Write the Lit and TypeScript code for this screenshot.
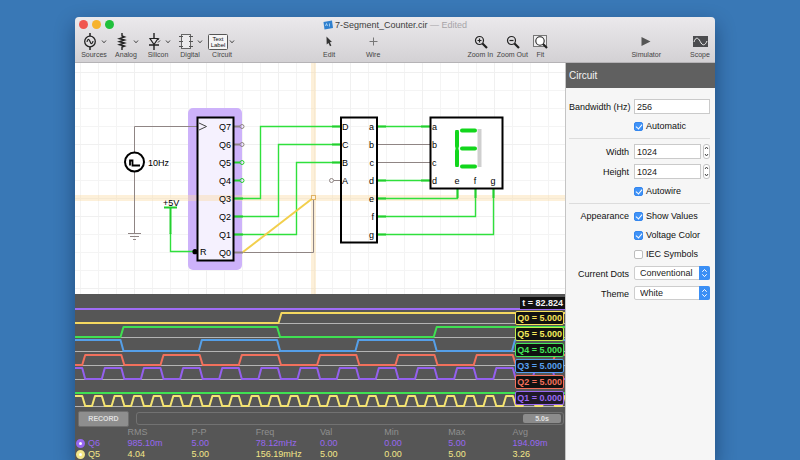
import { LitElement, html, svg, css } from "lit";
import { customElement } from "lit/decorators.js";

const GREEN = "#2fe03c";
const WIRE_GREY = "#8f8584";

/* Square-wave path: starts at `high` or low, toggles at first + k * half. */
function wave(hi: number, lo: number, startHigh: boolean, first: number, half: number, end = 2400): string {
  let level = startHigh ? hi : lo;
  let d = `M0 ${level}`;
  for (let x = first; x < end; x += half) {
    const next = level === hi ? lo : hi;
    d += ` L${(x - 1.5).toFixed(1)} ${level} L${(x + 1.5).toFixed(1)} ${next}`;
    level = next;
  }
  return d + ` L${end} ${level}`;
}

const PERIOD = 39.15;
const traces = [
  { color: "#9f6cf5", d: "M0 15 H2400" },
  { color: "#f5d860", d: wave(19, 29, false, 205, 5000) },
  { color: "#3fe052", d: wave(33, 43, false, 47, PERIOD * 4) },
  { color: "#559fe8", d: wave(46, 57, true, 47, PERIOD * 2) },
  { color: "#f2705c", d: wave(61, 71, false, 8.7, PERIOD) },
  { color: "#9460ee", d: wave(74, 85, true, 8.7, PERIOD / 2) },
  { color: "#3fe052", d: "M0 99 H2400" },
  { color: "#f5e472", d: wave(102, 112, true, 8.7, PERIOD / 4) },
];

const readouts = [
  { text: "Q0 = 5.000", cls: "yellow" },
  { text: "Q5 = 5.000", cls: "lime" },
  { text: "Q4 = 5.000", cls: "green" },
  { text: "Q3 = 5.000", cls: "blue" },
  { text: "Q2 = 5.000", cls: "red" },
  { text: "Q1 = 0.000", cls: "purple" },
];

@customElement("circuit-toolbar")
export class CircuitToolbar extends LitElement {
  static styles = css`
    :host {
      display: block;
      color: #444;
      background: linear-gradient(#ebe9ec, #d3d1d4);
      border-bottom: 1px solid #b5b3b6;
      border-radius: 4px 4px 0 0;
    }
    .title-row {
      display: grid;
      grid-template-columns: 1fr auto 1fr;
      align-items: center;
      height: 15px;
      padding: 0 4px;
    }
    .lights {
      display: flex;
      gap: 4px;
    }
    .light {
      width: 9px;
      height: 9px;
      padding: 0;
      border: 0;
      border-radius: 50%;
    }
    .close { background: #f0564f; }
    .mini { background: #f6b32e; }
    .full { background: #20c03c; }
    .title {
      display: flex;
      align-items: center;
      gap: 2px;
      margin: 0;
      font-size: 9px;
      font-weight: 400;
      line-height: 12px;
      color: #3c3c3c;
    }
    .edited { color: #a6a4a8; }
    .tools {
      display: flex;
      justify-content: space-between;
      padding: 1px 3px 2px;
    }
    .group { display: flex; }
    .wide { gap: 20px; }
    .wider { gap: 27px; }
    .tool {
      display: flex;
      flex-direction: column;
      align-items: center;
      min-width: 24px;
      padding: 0;
      border: 0;
      background: none;
      font: 7px/10px "Liberation Sans", Arial, sans-serif;
      color: #444;
      white-space: nowrap;
    }
    .part, .zoom { width: 32px; }
    .icons {
      display: flex;
      align-items: center;
      height: 17px;
    }
    .part .icons {
      width: 100%;
      gap: 0;
    }
    svg { display: block; }
  `;

  private part(label: string, icon: unknown) {
    return html`<button class="tool part">
      <span class="icons">
        <svg width="23" height="17" fill="none" stroke="#222">${icon}</svg>
        <svg width="6" height="6" fill="none" stroke="#444"><path d="M1 1.5 L3 3.8 L5 1.5" /></svg>
      </span>
      <span>${label}</span>
    </button>`;
  }

  render() {
    const glass = svg`<circle cx="6.5" cy="6.5" r="4" stroke-width="1.2" /><path d="M9.5 9.5 L14 14" stroke-width="2.2" />`;
    return html`
      <div class="title-row">
        <div class="lights">
          <button class="light close" aria-label="Close"></button>
          <button class="light mini" aria-label="Minimize"></button>
          <button class="light full" aria-label="Zoom window"></button>
        </div>
        <h1 class="title">
          <svg width="10" height="10">
            <path d="M0.5 2 L9 0.5 L10 8 L1.5 9.5 Z" fill="#2f80cf" />
            <path d="M2.5 6 L3.5 3.5 L4.5 6 M6.5 3.5 V6.5" fill="none" stroke="#bfe0fa" stroke-width="0.8" />
          </svg>
          <span>7-Segment_Counter.cir <span class="edited">— Edited</span></span>
        </h1>
      </div>
      <div class="tools">
        <div class="group">
          ${this.part("Sources", svg`
            <path d="M12 0 V3 M12 14 V17" stroke-width="1.5" />
            <circle cx="12" cy="8.5" r="5.3" stroke-width="1.3" />
            <path d="M9 9 C9.5 5.5 11 5.5 12 8.5 S14.5 11.5 15 8" stroke-width="1.2" />`)}
          ${this.part("Analog", svg`
            <path d="M12 0 V3 L14.5 4 L9.5 5.6 L14.5 7 L9.5 8.6 L14.5 10 L9.5 11.6 L14.5 13 L12 14 V17" stroke-width="1.4" />`)}
          ${this.part("Silicon", svg`
            <path d="M12 0 V17 M7 12 H17" stroke-width="1.4" />
            <path d="M8 5.5 H16 L12 11.5 Z" fill="#e3e1e4" stroke-width="1.2" />
            <path d="M16 9.5 L18 7.5 M16 7 L17 5.5" stroke-width="0.9" />`)}
          ${this.part("Digital", svg`
            <rect x="7.5" y="1.5" width="9" height="14" stroke="#666" fill="#ecebed" />
            <path d="M5 3.5 H9 M5 8.5 H9 M5 13.5 H9 M15 3.5 H19 M15 8.5 H19 M15 13.5 H19" stroke="#555" />`)}
          ${this.part("Circuit", svg`
            <rect x="2.5" y="1.5" width="19" height="15" rx="1" stroke="#555" fill="#f6f5f6" />
            <g fill="#111" stroke="none" font-size="6" text-anchor="middle">
              <text x="12" y="8">Text</text><text x="12" y="14">Label</text>
            </g>`)}
        </div>
        <div class="group wide">
          <button class="tool">
            <span class="icons"><svg width="10" height="13"><path d="M2.5 1.5 L8 7 L5.8 7.2 L7.4 10.6 L6 11.3 L4.5 7.9 L2.7 9.4 Z" fill="#333" /></svg></span>
            <span>Edit</span>
          </button>
          <button class="tool">
            <span class="icons"><svg width="9" height="9"><path d="M4.5 0.5 V8.5 M0.5 4.5 H8.5" stroke="#777" /></svg></span>
            <span>Wire</span>
          </button>
        </div>
        <div class="group">
          <button class="tool zoom">
            <span class="icons"><svg width="15" height="15" fill="none" stroke="#222">${glass}<path d="M4.5 6.5 H8.5 M6.5 4.5 V8.5" stroke-width="1.2" /></svg></span>
            <span>Zoom In</span>
          </button>
          <button class="tool zoom">
            <span class="icons"><svg width="15" height="15" fill="none" stroke="#222">${glass}<path d="M4.5 6.5 H8.5" stroke-width="1.2" /></svg></span>
            <span>Zoom Out</span>
          </button>
          <button class="tool">
            <span class="icons"><svg width="15" height="15" fill="none" stroke="#222"><rect x="0.5" y="1.5" width="13" height="11" stroke="#777" fill="#efeef0" /><circle cx="7" cy="7" r="4.2" fill="#fff" stroke-width="1.1" /><path d="M10 10 L14 14" stroke-width="2.2" /></svg></span>
            <span>Fit</span>
          </button>
        </div>
        <div class="group wider">
          <button class="tool">
            <span class="icons"><svg width="10" height="9"><path d="M0.5 0 L9.5 4.5 L0.5 9 Z" fill="#555" /></svg></span>
            <span>Simulator</span>
          </button>
          <button class="tool">
            <span class="icons"><svg width="15" height="11"><rect width="15" height="11" fill="#4c4c4f" /><path d="M1 6 C2.5 1 5 1 7.2 5.5 S12 10 14 5" fill="none" stroke="#eee" /></svg></span>
            <span>Scope</span>
          </button>
        </div>
      </div>
    `;
  }
}

@customElement("circuit-canvas")
export class CircuitCanvas extends LitElement {
  static styles = css`
    :host {
      display: block;
      height: 231px;
      background: #fff;
    }
    .sheet {
      display: block;
      width: 100%;
      height: 100%;
      font-size: 9px;
    }
  `;

  render() {
    const rows = [0, 1, 2, 3, 4, 5, 6, 7];
    const pinY = (i: number) => 63.5 + 18 * i;
    return html`
      <svg class="sheet" role="img" aria-label="Counter circuit">
        <defs>
          <pattern id="minor" x="5" y="9" width="18" height="18" patternUnits="userSpaceOnUse">
            <path d="M0.5 0 V18 M0 0.5 H18" stroke="#f4f4f4" />
          </pattern>
          <pattern id="major" x="59" y="9" width="72" height="72" patternUnits="userSpaceOnUse">
            <path d="M0.5 0 V72 M0 0.5 H72" stroke="#f0f0f0" />
          </pattern>
        </defs>
        <rect width="100%" height="100%" fill="url(#minor)" />
        <rect width="100%" height="100%" fill="url(#major)" />
        <rect x="113" y="45" width="54" height="162" rx="5" fill="#cdb2fa" />
        <rect x="122" y="54" width="36" height="144" fill="#f5f1fe" />
        <rect x="0" y="132" width="100%" height="6" fill="#f9d9a0" opacity="0.4" />
        <rect x="236" y="0" width="5" height="100%" fill="#f9d9a0" opacity="0.4" />

        <g fill="none" stroke=${WIRE_GREY}>
          <path d="M59.5 89 V63.5 H122 M59.5 109 V170" />
          <path d="M53 170.5 H66 M55 173.5 H64 M58 176.5 H61" stroke-width="1.2" />
          <path d="M167 189.5 H238.5 V137" />
          <path d="M302 81.5 H355 M302 99.5 H355" />
          <path d="M259 117.5 H266" />
          <circle cx="256.5" cy="117.5" r="2" />
          <path d="M159 63.5 H165 M159 81.5 H165 M159 189.5 H168" stroke-width="2" />
          <circle cx="167" cy="63.5" r="2" />
          <circle cx="167" cy="81.5" r="2" />
        </g>

        <g fill="none" stroke=${GREEN}>
          <path d="M95.5 170 V188.5 H119" stroke-width="1.4" />
          <path d="M159 135.5 H185.5 V63.5 H266" stroke-width="1.4" />
          <path d="M159 153.5 H203.5 V81.5 H266" stroke-width="1.4" />
          <path d="M159 171.5 H221.5 V99.5 H266" stroke-width="1.4" />
          <path d="M302 63.5 H355 M302 117.5 H355" stroke-width="1.4" />
          <path d="M302 135.5 H382.5 V126 M302 153.5 H400.5 V126 M302 171.5 H418.5 V126" stroke-width="1.4" />
        </g>
        <g fill="none" stroke="#22cf2e" stroke-width="2">
          <path d="M89 144.5 H102 M95.5 144 V171" />
          <path d="M159 99.5 H165 M159 117.5 H165 M159 135.5 H168 M159 153.5 H168 M159 171.5 H168" />
          <path d="M257 63.5 H266 M257 81.5 H266 M257 99.5 H266" />
          <path d="M302 63.5 H311 M302 117.5 H311 M302 135.5 H311 M302 153.5 H311 M302 171.5 H311" />
          <path d="M346 63.5 H355 M346 117.5 H355 M382.5 126 V135 M400.5 126 V135 M418.5 126 V135" />
          <circle cx="167" cy="99.5" r="2" stroke-width="1" />
          <circle cx="167" cy="117.5" r="2" stroke-width="1" />
        </g>

        <path d="M168 189 L238 135" stroke="#f2cf4c" stroke-width="2" />
        <rect x="236.5" y="132.5" width="4" height="4" fill="#fdf2dc" stroke="#e0b264" />

        <circle cx="59.5" cy="99" r="9.5" fill="#fff" stroke="#000" stroke-width="2" />
        <path d="M55 102.5 V97.5 H57.5 V102.5 H65" fill="none" stroke="#000" stroke-width="1.8" />

        <g fill="none" stroke="#000" stroke-width="2">
          <rect x="122.5" y="54.5" width="36" height="143" />
          <rect x="266" y="54.5" width="36" height="125" />
          <rect x="355.5" y="54.5" width="72" height="71" fill="#fff" />
        </g>
        <path d="M124 60 L131.5 63.5 L124 67" fill="none" stroke="#444" />
        <circle cx="120" cy="188.7" r="2.6" fill="#000" />

        <path d="M404.5 66 V104" stroke="#cfcfcf" stroke-width="4" />
        <g stroke="#12d61c" stroke-width="4" stroke-linecap="round">
          <path d="M382 69 V83 M382 88 V102 M387 67.5 H400 M387 85.5 H400 M387 103.5 H400" />
        </g>
        <path d="M382 67 V104" stroke="#12d61c" stroke-width="3" />

        <g fill="#000">
          <text x="73" y="103">10Hz</text>
          <text x="88" y="143">+5V</text>
          <text x="125" y="192">R</text>
          ${rows.map((i) => svg`<text x="156" y=${pinY(i) + 3.5} text-anchor="end">Q${7 - i}</text>`)}
          ${["D", "C", "B", "A"].map((t, i) => svg`<text x="267" y=${pinY(i) + 3.5}>${t}</text>`)}
          ${[..."abcdefg"].map((t, i) => svg`<text x="299" y=${pinY(i) + 3.5} text-anchor="end">${t}</text>`)}
          ${[..."abcd"].map((t, i) => svg`<text x="357" y=${pinY(i) + 3.5}>${t}</text>`)}
          ${[..."efg"].map((t, i) => svg`<text x=${382 + 18 * i} y="121" text-anchor="middle">${t}</text>`)}
        </g>
      </svg>
    `;
  }
}

@customElement("circuit-scope")
export class CircuitScope extends LitElement {
  static styles = css`
    :host {
      display: flex;
      flex-direction: column;
      flex: 1;
      background: #565656;
    }
    .plot {
      position: relative;
      height: 116px;
      overflow: hidden;
    }
    .traces {
      display: block;
      width: 100%;
      height: 100%;
    }
    .readouts {
      position: absolute;
      top: 3px;
      right: 0;
      display: flex;
      flex-direction: column;
      align-items: flex-end;
      gap: 2px;
      font-size: 9px;
      font-weight: 700;
      line-height: 12px;
    }
    .time {
      padding: 0 2px;
      background: #111;
      color: #f2f2f2;
    }
    .readout {
      margin-right: 1px;
      padding: 0 1px;
      border: 1px solid currentColor;
      border-radius: 2px;
      background: #111;
    }
    .yellow { color: #f7e05a; }
    .lime { color: #f3ea5c; border-color: #c4ee4c; }
    .green { color: #44e85a; }
    .blue { color: #569ff0; }
    .red { color: #f4705c; }
    .purple { color: #9a68f2; background: #1f1a28; }
    .controls {
      display: flex;
      align-items: center;
      gap: 7px;
      height: 17px;
      padding: 0 1px 0 3px;
    }
    .record {
      width: 51px;
      height: 16px;
      padding: 0;
      border: 1px solid #6e6e6e;
      border-radius: 2px;
      background: #8e8e8e;
      color: #dedede;
      font: 700 7px/12px "Liberation Sans", Arial, sans-serif;
    }
    .track {
      display: flex;
      flex: 1;
      justify-content: flex-end;
      padding: 1px 2px;
      border: 1px solid #727272;
      border-radius: 3px;
    }
    .thumb {
      width: 38px;
      height: 9px;
      padding: 0;
      border: 0;
      border-radius: 2px;
      background: #8c8c8c;
      color: #e4e4e4;
      font: 700 7px/9px "Liberation Sans", Arial, sans-serif;
    }
    .stats {
      width: 100%;
      table-layout: fixed;
      border-collapse: collapse;
      font-size: 9px;
      line-height: 11px;
      white-space: nowrap;
    }
    .name-col { width: 10.7%; }
    .stat-col { width: 13.1%; }
    th, td {
      padding: 0;
      text-align: left;
      font-weight: 400;
    }
    thead { color: #8f8f8f; }
    .row-name {
      display: flex;
      align-items: center;
      gap: 3px;
      padding-left: 1px;
    }
    .q6 { color: #9767f0; }
    .q5 { color: #f3e688; }
    .dot {
      width: 3px;
      height: 3px;
      border: 3px solid currentColor;
      border-radius: 50%;
      background: #fff;
    }
  `;

  render() {
    const stats = [
      { name: "Q6", cls: "q6", v: ["985.10m", "5.00", "78.12mHz", "0.00", "0.00", "5.00", "194.09m"] },
      { name: "Q5", cls: "q5", v: ["4.04", "5.00", "156.19mHz", "5.00", "0.00", "5.00", "3.26"] },
    ];
    return html`
      <div class="plot">
        <svg class="traces" fill="none" role="img" aria-label="Signal traces">
          <path d="M0 29.5 H2400 M0 43.5 H2400 M0 57.5 H2400 M0 71.5 H2400 M0 85.5 H2400 M0 112.5 H2400" stroke="#b4b4b4" />
          ${traces.map((t) => svg`<path d=${t.d} stroke=${t.color} stroke-width="2" stroke-linejoin="round" />`)}
        </svg>
        <div class="readouts">
          <span class="time">t = 82.824</span>
          ${readouts.map((r) => html`<span class="readout ${r.cls}">${r.text}</span>`)}
        </div>
      </div>
      <div class="controls">
        <button class="record">RECORD</button>
        <div class="track"><button class="thumb">5.0s</button></div>
      </div>
      <table class="stats">
        <colgroup>
          <col class="name-col" />
          ${[1, 2, 3, 4, 5, 6].map(() => html`<col class="stat-col" />`)}
          <col />
        </colgroup>
        <thead>
          <tr>
            <td></td>
            ${["RMS", "P-P", "Freq", "Val", "Min", "Max", "Avg"].map((h) => html`<th scope="col">${h}</th>`)}
          </tr>
        </thead>
        <tbody>
          ${stats.map((s) => html`<tr class=${s.cls}>
            <th scope="row"><span class="row-name"><span class="dot"></span>${s.name}</span></th>
            ${s.v.map((v) => html`<td>${v}</td>`)}
          </tr>`)}
        </tbody>
      </table>
    `;
  }
}

@customElement("circuit-inspector")
export class CircuitInspector extends LitElement {
  static styles = css`
    :host {
      display: block;
      box-sizing: border-box;
      border-left: 1px solid #c4c4c4;
      background: #f6f6f6;
      color: #111;
      font-size: 9px;
      line-height: 14px;
    }
    .heading {
      margin: 0;
      padding-left: 3px;
      background: #606060;
      color: #f4f4f4;
      font-size: 10px;
      font-weight: 400;
      line-height: 25px;
    }
    .form { padding: 6px 5px 0 3px; }
    .section {
      display: grid;
      grid-template-columns: 60px 1fr;
      gap: 5px;
      align-items: center;
      padding: 5px 0;
    }
    .section + .section { border-top: 1px solid #dcdcdc; }
    .name {
      text-align: right;
      white-space: nowrap;
    }
    .check {
      grid-column: 2;
      display: flex;
      align-items: center;
      gap: 3px;
      white-space: nowrap;
    }
    .box {
      appearance: none;
      display: grid;
      place-items: center;
      box-sizing: border-box;
      width: 9px;
      height: 9px;
      margin: 0;
      border: 1px solid #bdbdbd;
      border-radius: 2px;
      background: #fff;
    }
    .box:checked {
      border-color: #3486ee;
      background: #3f92f7;
    }
    .box:checked::after {
      content: "";
      box-sizing: border-box;
      width: 4px;
      height: 6px;
      border: solid #fff;
      border-width: 0 1px 1px 0;
      transform: rotate(40deg);
    }
    .field {
      display: flex;
      gap: 2px;
      min-width: 0;
    }
    .input {
      box-sizing: border-box;
      flex: 1;
      min-width: 0;
      height: 15px;
      padding: 0 2px;
      border: 1px solid #cacaca;
      background: #fff;
      color: #222;
      font: 9px/12px "Liberation Sans", Arial, sans-serif;
    }
    .stepper {
      display: flex;
      flex-direction: column;
      box-sizing: border-box;
      width: 7px;
      border: 1px solid #c2c2c2;
      border-radius: 3px;
      background: #fff;
    }
    .step {
      display: grid;
      place-items: center;
      flex: 1;
      padding: 0;
      border: 0;
      background: none;
    }
    .select-wrap {
      position: relative;
      height: 15px;
    }
    .select {
      appearance: none;
      box-sizing: border-box;
      width: 100%;
      height: 14px;
      padding: 0 12px 0 5px;
      border: 1px solid #cdcdcd;
      border-radius: 2px;
      background: #fff;
      color: #222;
      font: 9px/12px "Liberation Sans", Arial, sans-serif;
      display: block;
    }
    .arrows {
      position: absolute;
      top: 0;
      right: 0;
      pointer-events: none;
    }
  `;

  private check(id: string, label: string, on: boolean) {
    return html`<label class="check"><input class="box" type="checkbox" id=${id} ?checked=${on} />${label}</label>`;
  }

  private size(id: string, label: string) {
    return html`<label class="name" for=${id}>${label}</label>
      <div class="field">
        <input class="input" id=${id} type="text" value="1024" />
        <div class="stepper">
          <button class="step" aria-label="Increase ${label}"><svg width="5" height="4" fill="none" stroke="#444"><path d="M1 3 L2.5 1 L4 3" /></svg></button>
          <button class="step" aria-label="Decrease ${label}"><svg width="5" height="4" fill="none" stroke="#444"><path d="M1 1 L2.5 3 L4 1" /></svg></button>
        </div>
      </div>`;
  }

  private choice(id: string, label: string, value: string) {
    return html`<label class="name" for=${id}>${label}</label>
      <div class="select-wrap">
        <select class="select" id=${id}><option>${value}</option></select>
        <svg class="arrows" width="11" height="14" fill="none">
          <path d="M0 0 H9 A2 2 0 0 1 11 2 V12 A2 2 0 0 1 9 14 H0 Z" fill="#3b8ff5" />
          <path d="M3.3 5.8 L5.5 3.5 L7.7 5.8 M3.3 8.3 L5.5 10.6 L7.7 8.3" stroke="#fff" />
        </svg>
      </div>`;
  }

  render() {
    return html`
      <h2 class="heading">Circuit</h2>
      <div class="form">
        <div class="section">
          <label class="name" for="bandwidth">Bandwidth (Hz)</label>
          <div class="field"><input class="input" id="bandwidth" type="text" value="256" /></div>
          ${this.check("automatic", "Automatic", true)}
        </div>
        <div class="section">
          ${this.size("width", "Width")} ${this.size("height", "Height")}
          ${this.check("autowire", "Autowire", true)}
        </div>
        <div class="section">
          <span class="name">Appearance</span>
          ${this.check("values", "Show Values", true)}
          ${this.check("voltage", "Voltage Color", true)}
          ${this.check("iec", "IEC Symbols", false)}
          ${this.choice("dots", "Current Dots", "Conventional")}
          ${this.choice("theme", "Theme", "White")}
        </div>
      </div>
    `;
  }
}

@customElement("app-root")
export class AppRoot extends LitElement {
  static styles = css`
    :host {
      display: flex;
      box-sizing: border-box;
      min-height: 100vh;
      padding: 17px 85px 0 75px;
      overflow: hidden;
      background: #3978b6;
      font-family: "Liberation Sans", Arial, sans-serif;
    }
    .window {
      display: flex;
      flex-direction: column;
      flex: 1;
      min-width: 0;
      border-radius: 4px 4px 0 0;
      box-shadow: 0 8px 20px rgba(0, 20, 50, 0.45);
    }
    .body {
      display: grid;
      grid-template-columns: minmax(0, 1fr) 150px;
      flex: 1;
    }
    .work {
      display: flex;
      flex-direction: column;
    }
  `;

  render() {
    return html`
      <main class="window">
        <circuit-toolbar></circuit-toolbar>
        <div class="body">
          <div class="work">
            <circuit-canvas></circuit-canvas>
            <circuit-scope></circuit-scope>
          </div>
          <circuit-inspector></circuit-inspector>
        </div>
      </main>
    `;
  }
}
